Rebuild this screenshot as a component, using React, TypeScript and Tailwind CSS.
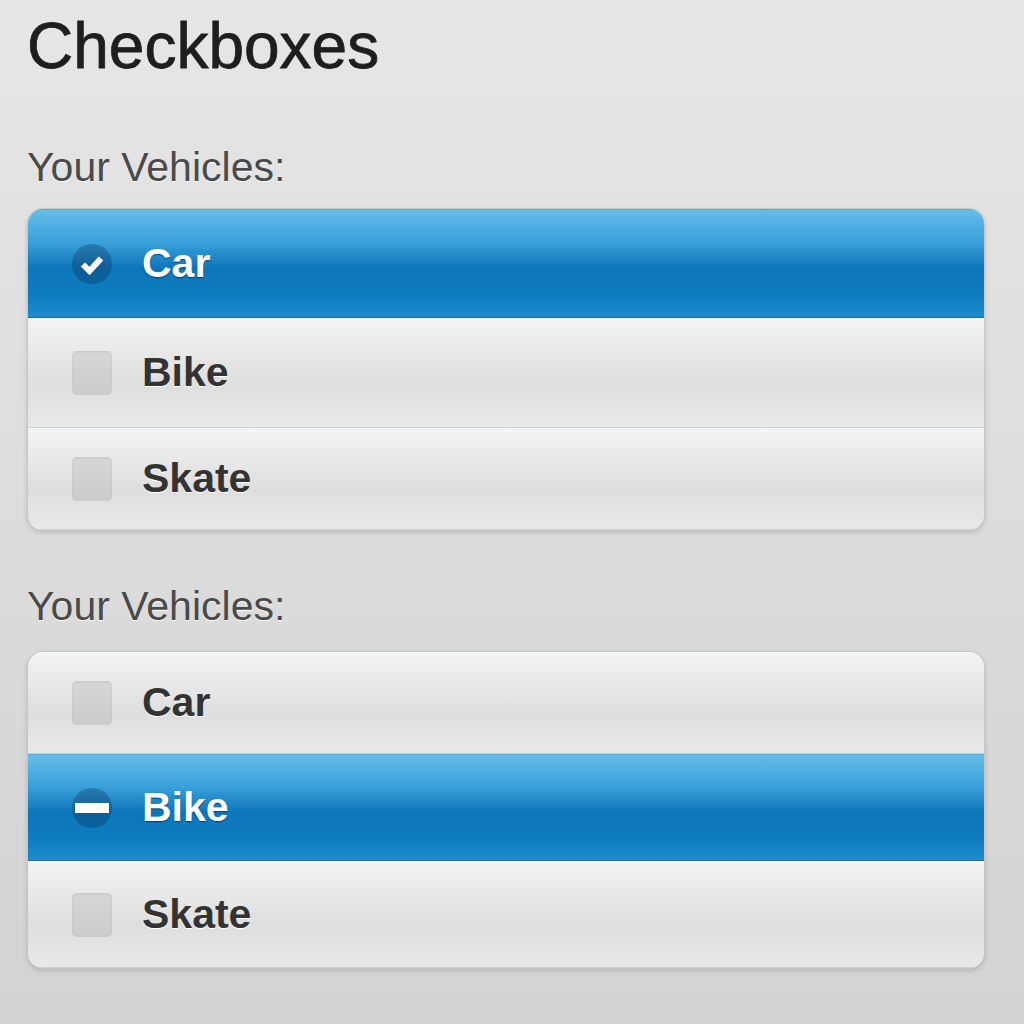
import { useState } from "react";

type Mode = "check" | "mixed" | "off";

const vehicles = ["Car", "Bike", "Skate"];

function Icon({ mode }: { mode: Mode }) {
  if (mode === "off") {
    return (
      <span className="block w-[40px] h-[44px] rounded-[5px] bg-[linear-gradient(#d6d6d6,#cbcbcb)] shadow-[inset_0_1px_2px_rgba(0,0,0,0.08)]" />
    );
  }
  return (
    <span className="flex items-center justify-center w-[40px] h-[40px] rounded-full bg-[rgba(10,40,70,0.3)]">
      {mode === "check" ? (
        <svg width="28" height="28" viewBox="0 0 28 28">
          <path d="M5 14.5 L11.5 21 L23 8.5" fill="none" stroke="#fff" strokeWidth="6" strokeLinejoin="miter" />
        </svg>
      ) : (
        <span className="block w-[34px] h-[10px] bg-white" />
      )}
    </span>
  );
}

function Group({ active, mode, heights }: { active: number; mode: Mode; heights: string[] }) {
  const [sel, setSel] = useState(active);
  return (
    <div className="rounded-[16px] border border-[#c6c6c6] overflow-hidden shadow-[0_2px_5px_rgba(0,0,0,0.15)] bg-[#e6e6e6]">
      {vehicles.map((v, i) => {
        const on = i === sel;
        return (
          <div
            key={v}
            onClick={() => setSel(i)}
            className={
              (on
                ? "flex items-center pl-[42px] border-t border-t-[#5aa9d8] border-b border-b-[#2a6a9a] bg-[linear-gradient(#66bde8,#3aa0da_30%,#0c76ba_55%,#0e7cbf_80%,#1d8dcd)] text-white [text-shadow:0_1px_1px_rgba(0,40,80,0.7)] "
                : "flex items-center pl-[42px] border-t border-t-[#f4fbff] border-b border-b-[#cfcfcf] bg-[linear-gradient(#f3f3f3,#e7e7e7_35%,#dedede_60%,#e9e9e9)] text-[#333] [text-shadow:0_1px_0_#fff] ") +
              heights[i]
            }
          >
            <span className="w-[44px] flex justify-center">
              <Icon mode={on ? mode : "off"} />
            </span>
            <span className="ml-[28px] text-[41px] font-bold">{v}</span>
          </div>
        );
      })}
    </div>
  );
}

export default function App() {
  return (
    <div className="w-[1024px] h-[1024px] overflow-hidden bg-[linear-gradient(#e6e6e6,#d3d3d3)] pl-[27px] pr-[39px] font-['Liberation_Sans',Arial,sans-serif]">
      <h1 className="mt-[14px] text-[64px] leading-[64px] text-[#1e1e1e] [-webkit-text-stroke:0.8px_#1e1e1e]">Checkboxes</h1>
      <p className="mt-[69px] text-[41px] leading-[41px] text-[#4a4a4a] [text-shadow:0_1px_0_#fff]">Your Vehicles:</p>
      <div className="mt-[20px]">
        <Group active={0} mode="check" heights={["h-[109px]", "h-[110px]", "h-[102px]"]} />
      </div>
      <p className="mt-[55px] text-[41px] leading-[41px] text-[#4a4a4a] [text-shadow:0_1px_0_#fff]">Your Vehicles:</p>
      <div className="mt-[24px]">
        <Group active={1} mode="mixed" heights={["h-[102px]", "h-[107px]", "h-[107px]"]} />
      </div>
    </div>
  );
}
